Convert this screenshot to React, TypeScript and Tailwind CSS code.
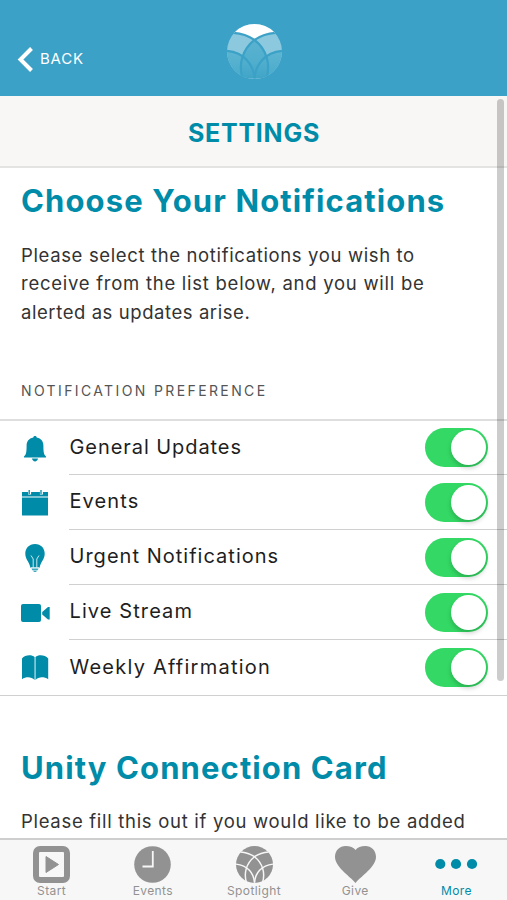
import { useState, type ReactNode } from 'react';

const LEFT_PETAL = 'M100 49 C68 52 52 74 50 99';
const RIGHT_PETAL = 'M0 49 C32 52 48 74 50 99';
const LEFT_ARC = 'M88 16 C72 17 60 22 50 29 C27 47 21 74 28 98';
const RIGHT_ARC = 'M12 16 C28 17 40 22 50 29 C73 47 79 74 72 98';

function HeaderLogo() {
  return (
    <svg viewBox="0 0 100 100" className="h-[55px] w-[55px]">
      <defs>
        <clipPath id="logo-clip">
          <circle cx="50" cy="50" r="50" />
        </clipPath>
        <linearGradient id="side-fade" x1="0" y1="0" x2="0" y2="1">
          <stop offset="0" stopColor="#5db5d1" />
          <stop offset="1" stopColor="#48aacb" />
        </linearGradient>
        <linearGradient id="petal-fade" x1="0" y1="0" x2="0" y2="1">
          <stop offset="0" stopColor="#5ab2d0" />
          <stop offset="0.6" stopColor="#50aecd" />
          <stop offset="1" stopColor="#41a5c8" />
        </linearGradient>
      </defs>
      <g clipPath="url(#logo-clip)">
        <rect width="100" height="100" fill="#8cc9de" />
        <path d="M0 49 C32 52 48 74 50 99 L0 100 Z" fill="url(#side-fade)" />
        <path d="M100 49 C68 52 52 74 50 99 L100 100 Z" fill="url(#side-fade)" />
        <path
          d="M50 29 C73 47 79 74 72 98 L28 98 C21 74 27 47 50 29 Z"
          fill="url(#petal-fade)"
        />
        <path d="M12 16 C28 17 40 22 50 29 C60 22 72 17 88 16 L88 0 L12 0 Z" fill="white" />
        <g fill="none" stroke="#3ba1c7" strokeWidth="4">
          <path d={LEFT_ARC} />
          <path d={RIGHT_ARC} />
          <path d={LEFT_PETAL} />
          <path d={RIGHT_PETAL} />
        </g>
      </g>
    </svg>
  );
}

function BellIcon() {
  return (
    <svg viewBox="0 0 28 28" className="h-7 w-7" fill="currentColor">
      <path d="M14 1 C15 1 15.6 1.6 15.7 2.4 C20.3 3.3 22.4 6.4 22.4 10.5 C22.4 17.5 23 20 25 21.4 V22.4 H3 V21.4 C5 20 5.6 17.5 5.6 10.5 C5.6 6.4 7.7 3.3 12.3 2.4 C12.4 1.6 13 1 14 1 Z" />
      <path d="M11 23.6 H17 C16.7 25.5 15.5 26.4 14 26.4 C12.5 26.4 11.3 25.5 11 23.6 Z" />
    </svg>
  );
}

function CalendarIcon() {
  return (
    <svg viewBox="0 0 28 28" className="h-7 w-7" fill="currentColor">
      <path d="M1 3 H27 V7.4 H1 Z M1 8.6 H27 V26.6 H1 Z" />
      <path d="M8.6 1 V5.5 M20.4 1 V5.5" stroke="white" strokeWidth="3" />
      <path d="M8.2 1 V5 M20 1 V5" stroke="currentColor" strokeWidth="1.3" />
    </svg>
  );
}

function BulbIcon() {
  return (
    <svg viewBox="0 0 28 28" className="h-7 w-7" fill="currentColor">
      <path d="M14 0 C20 0 23.7 4.3 23.7 9.8 C23.7 15.5 19.4 18 18.6 24 H9.4 C8.6 18 4.3 15.5 4.3 9.8 C4.3 4.3 8 0 14 0 Z" />
      <path
        d="M10 11.5 L12.2 15 V23.5 M18 11.5 L15.8 15 V23.5 M9.5 23.6 H18.5"
        fill="none"
        stroke="white"
        strokeWidth="0.8"
      />
      <path d="M10.5 24.5 H17.5 L16.8 26.3 H11.2 Z M12 26.8 H16 L15 28 H13 Z" opacity="0.75" />
    </svg>
  );
}

function VideoIcon() {
  return (
    <svg viewBox="0 0 30 28" className="h-7 w-[30px]" fill="currentColor">
      <rect x="0" y="5" width="20" height="18" rx="2" />
      <path d="M21.2 13 L27 8 H28.7 V20.5 H27 L21.2 15.5 Z" />
    </svg>
  );
}

function BookIcon() {
  return (
    <svg viewBox="0 0 28 28" className="h-7 w-7" fill="currentColor">
      <path d="M13.6 26 C10.5 22.6 5 22.6 1 25.2 V4.5 C4 .3 11 .3 13.6 3 Z" />
      <path d="M14.5 26 C17.5 22.6 23 22.6 27.2 25.2 V4.5 C24 .3 17 .3 14.5 3 Z" />
    </svg>
  );
}

const PREFERENCES = [
  { id: 'general', label: 'General Updates', icon: <BellIcon />, tracking: 'tracking-[0.93px]' },
  { id: 'events', label: 'Events', icon: <CalendarIcon />, tracking: 'tracking-[1.1px]' },
  { id: 'urgent', label: 'Urgent Notifications', icon: <BulbIcon />, tracking: 'tracking-[1.02px]' },
  { id: 'live', label: 'Live Stream', icon: <VideoIcon />, tracking: 'tracking-[1.1px]' },
  { id: 'weekly', label: 'Weekly Affirmation', icon: <BookIcon />, tracking: 'tracking-[1.24px]' },
];

function Toggle({ on, label, onChange }: { on: boolean; label: string; onChange: () => void }) {
  return (
    <button
      type="button"
      role="switch"
      aria-checked={on}
      aria-label={label}
      onClick={onChange}
      className={`flex h-[39px] w-[63px] items-center rounded-full px-[2.5px] ${
        on ? 'justify-end bg-[#33d964]' : 'justify-start bg-gray-300'
      }`}
    >
      <span className="h-[35px] w-[35px] rounded-full bg-white shadow-[0_3px_5px_rgba(0,0,0,0.2)]" />
    </button>
  );
}

function Tab({ label, active, children }: { label: string; active?: boolean; children: ReactNode }) {
  return (
    <button
      type="button"
      className={`flex flex-1 flex-col items-center pt-[5px] ${
        active ? 'text-[#008ca8]' : 'text-[#929292]'
      }`}
    >
      <span className="flex h-[38px] items-center">{children}</span>
      <span className="mt-[1px] text-[12px] leading-[14px] tracking-[0.4px]">{label}</span>
    </button>
  );
}

export default function App() {
  const [enabled, setEnabled] = useState<Record<string, boolean>>({
    general: true,
    events: true,
    urgent: true,
    live: true,
    weekly: true,
  });

  const toggle = (id: string) => setEnabled((prev) => ({ ...prev, [id]: !prev[id] }));

  return (
    <div className="relative flex h-[900px] w-[507px] flex-col overflow-hidden bg-white font-['Inter',sans-serif] text-[#333]">
      <header className="grid h-24 shrink-0 grid-cols-3 bg-[#3ba1c7]">
        <button type="button" className="mt-[45px] ml-[16px] flex h-7 items-center text-white">
          <svg viewBox="0 0 17 28" className="h-7 w-[17px]">
            <path d="M15.5 3.5 L4.5 14.5 L15.5 25.5" fill="none" stroke="currentColor" strokeWidth="4" />
          </svg>
          <span className="ml-[7px] text-[15px] tracking-[0.8px]">BACK</span>
        </button>
        <div className="flex justify-center pt-6 pl-px">
          <HeaderLogo />
        </div>
      </header>

      <div className="flex h-[72px] shrink-0 items-center justify-center border-b-2 border-[#e4e4e3] bg-[#f9f7f6] pt-[6px] pl-px">
        <h1 className="text-[25px] font-bold tracking-[0.75px] text-[#008ca8]">SETTINGS</h1>
      </div>

      <main className="min-h-0 flex-1 overflow-hidden">
        <section className="px-[21px] pt-[13px]">
          <h2 className="text-[31px] leading-10 font-bold tracking-[1.12px] whitespace-nowrap text-[#008ca8]">
            Choose Your Notifications
          </h2>
          <p className="mt-[19.5px] text-[18.5px] leading-[28.5px] whitespace-nowrap">
            <span className="block tracking-[0.64px]">Please select the notifications you wish to</span>
            <span className="block tracking-[0.74px]">receive from the list below, and you will be</span>
            <span className="block tracking-[0.57px]">alerted as updates arise.</span>
          </p>
          <h3 className="mt-[54.5px] text-[14px] leading-5 tracking-[2.38px] text-[#555]">
            NOTIFICATION PREFERENCE
          </h3>
        </section>

        <ul className="mt-[18.5px] border-t-2 border-b border-t-[#dedede] border-b-[#d0d0d0]">
          {PREFERENCES.map((pref, i) => (
            <li key={pref.id} className="flex h-[55px] pl-[21px] first:h-[54px]">
              <span className="mt-[14px] w-[48px] shrink-0 text-[#008ca8]">{pref.icon}</span>
              <div
                className={`flex flex-1 items-center justify-between pr-[19px] ${
                  i < PREFERENCES.length - 1 ? 'border-b border-[#d0d0d0]' : ''
                }`}
              >
                <span className={`pb-[2px] pl-[0.5px] text-[20px] leading-6 whitespace-nowrap text-[#1e1e1e] ${pref.tracking}`}>
                  {pref.label}
                </span>
                <Toggle on={enabled[pref.id]} label={pref.label} onChange={() => toggle(pref.id)} />
              </div>
            </li>
          ))}
        </ul>

        <section className="px-[21px] pt-[52px]">
          <h2 className="text-[31px] leading-10 font-bold tracking-[1.1px] whitespace-nowrap text-[#008ca8]">
            Unity Connection Card
          </h2>
          <p className="mt-[19px] text-[18.5px] leading-[28.5px] tracking-[0.7px] whitespace-nowrap">
            Please fill this out if you would like to be added
          </p>
        </section>
      </main>

      <nav className="flex h-[62px] shrink-0 border-t-2 border-[#cecece] bg-[#f7f7f7] pl-px">
        <Tab label="Start">
          <svg viewBox="0 0 37 37" className="h-[37px] w-[37px]">
            <rect x="3" y="3" width="31" height="31" rx="4" fill="none" stroke="currentColor" strokeWidth="6" />
            <path d="M13 10.5 L25.5 18.5 L13 26.5 Z" fill="currentColor" stroke="currentColor" strokeLinejoin="round" />
          </svg>
        </Tab>
        <Tab label="Events">
          <svg viewBox="0 0 37 37" className="h-[37px] w-[37px]">
            <circle cx="18.5" cy="18.5" r="18.3" fill="currentColor" />
            <path d="M18.8 5 V20.5 H8.5" fill="none" stroke="#f7f7f7" strokeWidth="1.8" />
          </svg>
        </Tab>
        <Tab label="Spotlight">
          <svg viewBox="0 0 100 100" className="h-[37px] w-[37px]">
            <circle cx="50" cy="50" r="50" fill="currentColor" />
            <g fill="none" stroke="#f7f7f7" strokeWidth="4">
              <path d={LEFT_ARC} />
              <path d={RIGHT_ARC} />
              <path d={LEFT_PETAL} />
              <path d={RIGHT_PETAL} />
            </g>
          </svg>
        </Tab>
        <Tab label="Give">
          <svg viewBox="0 0 41 37" className="h-[37px] w-[41px]" fill="currentColor">
            <path d="M20.5 37 C14 29.5 0 21 0 10.8 C0 4.5 4.8 0 10.6 0 C15 0 18.7 1.4 20.5 4 C22.3 1.4 26 0 30.4 0 C36.2 0 41 4.5 41 10.8 C41 21 27 29.5 20.5 37 Z" />
          </svg>
        </Tab>
        <Tab label="More" active>
          <svg viewBox="0 0 42 12" className="h-3 w-[42px]" fill="currentColor">
            <circle cx="5.3" cy="6" r="5.1" />
            <circle cx="21" cy="6" r="5.1" />
            <circle cx="37" cy="6" r="5.1" />
          </svg>
        </Tab>
      </nav>

      {/* scroll indicator */}
      <div className="absolute top-[99px] right-[3px] h-[582px] w-[7px] rounded-full bg-black/20" />
    </div>
  );
}
